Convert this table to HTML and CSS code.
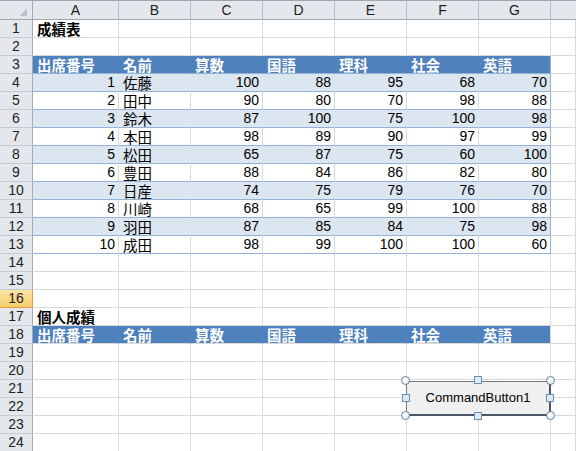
FILE: index.html
```html
<!DOCTYPE html>
<html lang="ja">
<head>
<meta charset="utf-8">
<title>成績表</title>
<link rel="stylesheet" href="styles.css">
</head>
<body>
<div class="sheet">
  <div class="row colhead">
    <div class="rh corner"></div>
    <div class="ch a">A</div><div class="ch">B</div><div class="ch">C</div><div class="ch">D</div><div class="ch">E</div><div class="ch">F</div><div class="ch">G</div><div class="ch h"></div>
  </div>
  <div class="row"><div class="rh">1</div><div class="c a title">成績表</div><div class="c"></div><div class="c"></div><div class="c"></div><div class="c"></div><div class="c"></div><div class="c"></div><div class="c h"></div></div>
  <div class="row"><div class="rh">2</div><div class="c a"></div><div class="c"></div><div class="c"></div><div class="c"></div><div class="c"></div><div class="c"></div><div class="c"></div><div class="c h"></div></div>
  <div class="row thead"><div class="rh">3</div><div class="c a">出席番号</div><div class="c">名前</div><div class="c">算数</div><div class="c">国語</div><div class="c">理科</div><div class="c">社会</div><div class="c last">英語</div><div class="c h"></div></div>
  <div class="row trow band"><div class="rh">4</div><div class="c a n">1</div><div class="c">佐藤</div><div class="c n">100</div><div class="c n">88</div><div class="c n">95</div><div class="c n">68</div><div class="c n last">70</div><div class="c h"></div></div>
  <div class="row trow"><div class="rh">5</div><div class="c a n">2</div><div class="c">田中</div><div class="c n">90</div><div class="c n">80</div><div class="c n">70</div><div class="c n">98</div><div class="c n last">88</div><div class="c h"></div></div>
  <div class="row trow band"><div class="rh">6</div><div class="c a n">3</div><div class="c">鈴木</div><div class="c n">87</div><div class="c n">100</div><div class="c n">75</div><div class="c n">100</div><div class="c n last">98</div><div class="c h"></div></div>
  <div class="row trow"><div class="rh">7</div><div class="c a n">4</div><div class="c">本田</div><div class="c n">98</div><div class="c n">89</div><div class="c n">90</div><div class="c n">97</div><div class="c n last">99</div><div class="c h"></div></div>
  <div class="row trow band"><div class="rh">8</div><div class="c a n">5</div><div class="c">松田</div><div class="c n">65</div><div class="c n">87</div><div class="c n">75</div><div class="c n">60</div><div class="c n last">100</div><div class="c h"></div></div>
  <div class="row trow"><div class="rh">9</div><div class="c a n">6</div><div class="c">豊田</div><div class="c n">88</div><div class="c n">84</div><div class="c n">86</div><div class="c n">82</div><div class="c n last">80</div><div class="c h"></div></div>
  <div class="row trow band"><div class="rh">10</div><div class="c a n">7</div><div class="c">日産</div><div class="c n">74</div><div class="c n">75</div><div class="c n">79</div><div class="c n">76</div><div class="c n last">70</div><div class="c h"></div></div>
  <div class="row trow"><div class="rh">11</div><div class="c a n">8</div><div class="c">川崎</div><div class="c n">68</div><div class="c n">65</div><div class="c n">99</div><div class="c n">100</div><div class="c n last">88</div><div class="c h"></div></div>
  <div class="row trow band"><div class="rh">12</div><div class="c a n">9</div><div class="c">羽田</div><div class="c n">87</div><div class="c n">85</div><div class="c n">84</div><div class="c n">75</div><div class="c n last">98</div><div class="c h"></div></div>
  <div class="row trow"><div class="rh">13</div><div class="c a n">10</div><div class="c">成田</div><div class="c n">98</div><div class="c n">99</div><div class="c n">100</div><div class="c n">100</div><div class="c n last">60</div><div class="c h"></div></div>
  <div class="row"><div class="rh">14</div><div class="c a"></div><div class="c"></div><div class="c"></div><div class="c"></div><div class="c"></div><div class="c"></div><div class="c"></div><div class="c h"></div></div>
  <div class="row"><div class="rh">15</div><div class="c a"></div><div class="c"></div><div class="c"></div><div class="c"></div><div class="c"></div><div class="c"></div><div class="c"></div><div class="c h"></div></div>
  <div class="row"><div class="rh sel">16</div><div class="c a"></div><div class="c"></div><div class="c"></div><div class="c"></div><div class="c"></div><div class="c"></div><div class="c"></div><div class="c h"></div></div>
  <div class="row"><div class="rh">17</div><div class="c a title">個人成績</div><div class="c"></div><div class="c"></div><div class="c"></div><div class="c"></div><div class="c"></div><div class="c"></div><div class="c h"></div></div>
  <div class="row fillhead"><div class="rh">18</div><div class="c a">出席番号</div><div class="c">名前</div><div class="c">算数</div><div class="c">国語</div><div class="c">理科</div><div class="c">社会</div><div class="c last">英語</div><div class="c h"></div></div>
  <div class="row"><div class="rh">19</div><div class="c a"></div><div class="c"></div><div class="c"></div><div class="c"></div><div class="c"></div><div class="c"></div><div class="c"></div><div class="c h"></div></div>
  <div class="row"><div class="rh">20</div><div class="c a"></div><div class="c"></div><div class="c"></div><div class="c"></div><div class="c"></div><div class="c"></div><div class="c"></div><div class="c h"></div></div>
  <div class="row"><div class="rh">21</div><div class="c a"></div><div class="c"></div><div class="c"></div><div class="c"></div><div class="c"></div><div class="c"></div><div class="c"></div><div class="c h"></div></div>
  <div class="row"><div class="rh">22</div><div class="c a"></div><div class="c"></div><div class="c"></div><div class="c"></div><div class="c"></div><div class="c"></div><div class="c"></div><div class="c h"></div></div>
  <div class="row"><div class="rh">23</div><div class="c a"></div><div class="c"></div><div class="c"></div><div class="c"></div><div class="c"></div><div class="c"></div><div class="c"></div><div class="c h"></div></div>
  <div class="row"><div class="rh">24</div><div class="c a"></div><div class="c"></div><div class="c"></div><div class="c"></div><div class="c"></div><div class="c"></div><div class="c"></div><div class="c h"></div></div>

  <div class="cmdbtn">
    <div class="btnface">CommandButton1</div>
    <span class="hd circ tl"></span><span class="hd circ tr"></span><span class="hd circ bl"></span><span class="hd circ br"></span>
    <span class="hd sq tm"></span><span class="hd sq ml"></span><span class="hd sq mr"></span><span class="hd sq bm"></span>
  </div>
</div>
</body>
</html>
```

FILE: styles.css
```css
* { box-sizing: border-box; }
html, body { margin: 0; padding: 0; background: #fff; overflow: hidden; }
body { width: 576px; height: 451px; }
.sheet {
  position: relative;
  width: 576px;
  height: 451px;
  overflow: hidden;
  font-family: "Liberation Sans", "Noto Sans CJK JP", sans-serif;
  font-size: 14.5px;
  color: #000;
}
.row { display: flex; height: 18px; }
.row > div { flex: none; height: 18px; line-height: 17px; white-space: nowrap; }

.rh {
  width: 33px;
  background: #e4e8ed;
  border-right: 1px solid #9eabb8;
  border-bottom: 1px solid #c5ccd4;
  text-align: center;
  font-size: 14px;
  color: #222;
}
.rh.sel {
  background: linear-gradient(#fbe2a6, #f6cd6c);
  border-right-color: #e5a23c;
  border-bottom-color: #e5a23c;
}

.colhead { height: 20px; }
.colhead > div { height: 20px; line-height: 18px; }
.ch {
  width: 72px;
  background: #e4e8ed;
  border-top: 1px solid #9ea6ae;
  border-right: 1px solid #b4bcc4;
  border-bottom: 1px solid #9ea6ae;
  text-align: center;
  font-size: 14px;
  color: #222;
}
.ch.a { width: 86px; }
.ch.h { flex: 1; border-right: none; }
.corner {
  border-top: 1px solid #9ea6ae;
  border-bottom: 1px solid #9ea6ae;
  background-color: #e4e8ed;
  background-image: linear-gradient(to bottom right, transparent 50%, #b9c0c7 50%);
  background-size: 8px 7px;
  background-position: right 5px bottom 3px;
  background-repeat: no-repeat;
}

.c {
  width: 72px;
  border-right: 1px solid #d9d9d9;
  border-bottom: 1px solid #d9d9d9;
  padding: 2px 3px 0 4px;
}
.c.a { width: 86px; }
.c.h { flex: 1; width: auto; }
.c.n { text-align: right; padding-top: 0; padding-right: 3px; font-size: 14px; }
.title { font-weight: bold; }

.thead .c:not(.h), .fillhead .c:not(.h) {
  background: #4f81bd;
  color: #fff;
  font-weight: bold;
  border-right-color: #4f81bd;
}
.thead .c:not(.h) { border-bottom-color: #95b3d7; }
.thead .c.last { border-right-color: #95b3d7; }
.fillhead .c.last { border-right-color: #d9d9d9; }

.trow .c:not(.h) { border-bottom-color: #95b3d7; }
.trow .c.last { border-right-color: #95b3d7; }
.band .c:not(.h) { background: #dce6f1; border-right-color: #dce6f1; }
.band .c.last { border-right-color: #95b3d7; }

.cmdbtn {
  position: absolute;
  left: 405px;
  top: 380px;
  width: 146px;
  height: 36px;
}
.btnface {
  position: absolute;
  left: 1px;
  top: 1px;
  right: 0;
  bottom: 0;
  background: #f0f0f0;
  border-top: 1px solid #6b7a8c;
  border-left: 1px solid #6b7a8c;
  border-right: 2px solid #4b5766;
  border-bottom: 2px solid #4b5766;
  font-family: "Liberation Sans", Arial, sans-serif;
  font-size: 13px;
  line-height: 31px;
  text-align: center;
  color: #000;
}
.hd { position: absolute; display: block; }
.circ {
  width: 9px; height: 9px;
  border-radius: 50%;
  background: radial-gradient(circle at 40% 35%, #ffffff, #d3ecf5);
  border: 1px solid #6e8294;
}
.sq {
  width: 8px; height: 8px;
  background: #d9ecf6;
  border: 1px solid #6f8fae;
}
.tl { left: -4px; top: -4px; }
.tr { right: -4px; top: -4px; }
.bl { left: -4px; bottom: -4px; }
.br { right: -4px; bottom: -4px; }
.tm { left: 69px; top: -4px; }
.bm { left: 69px; bottom: -4px; }
.ml { left: -3px; top: 14px; }
.mr { right: -3px; top: 14px; }
```
